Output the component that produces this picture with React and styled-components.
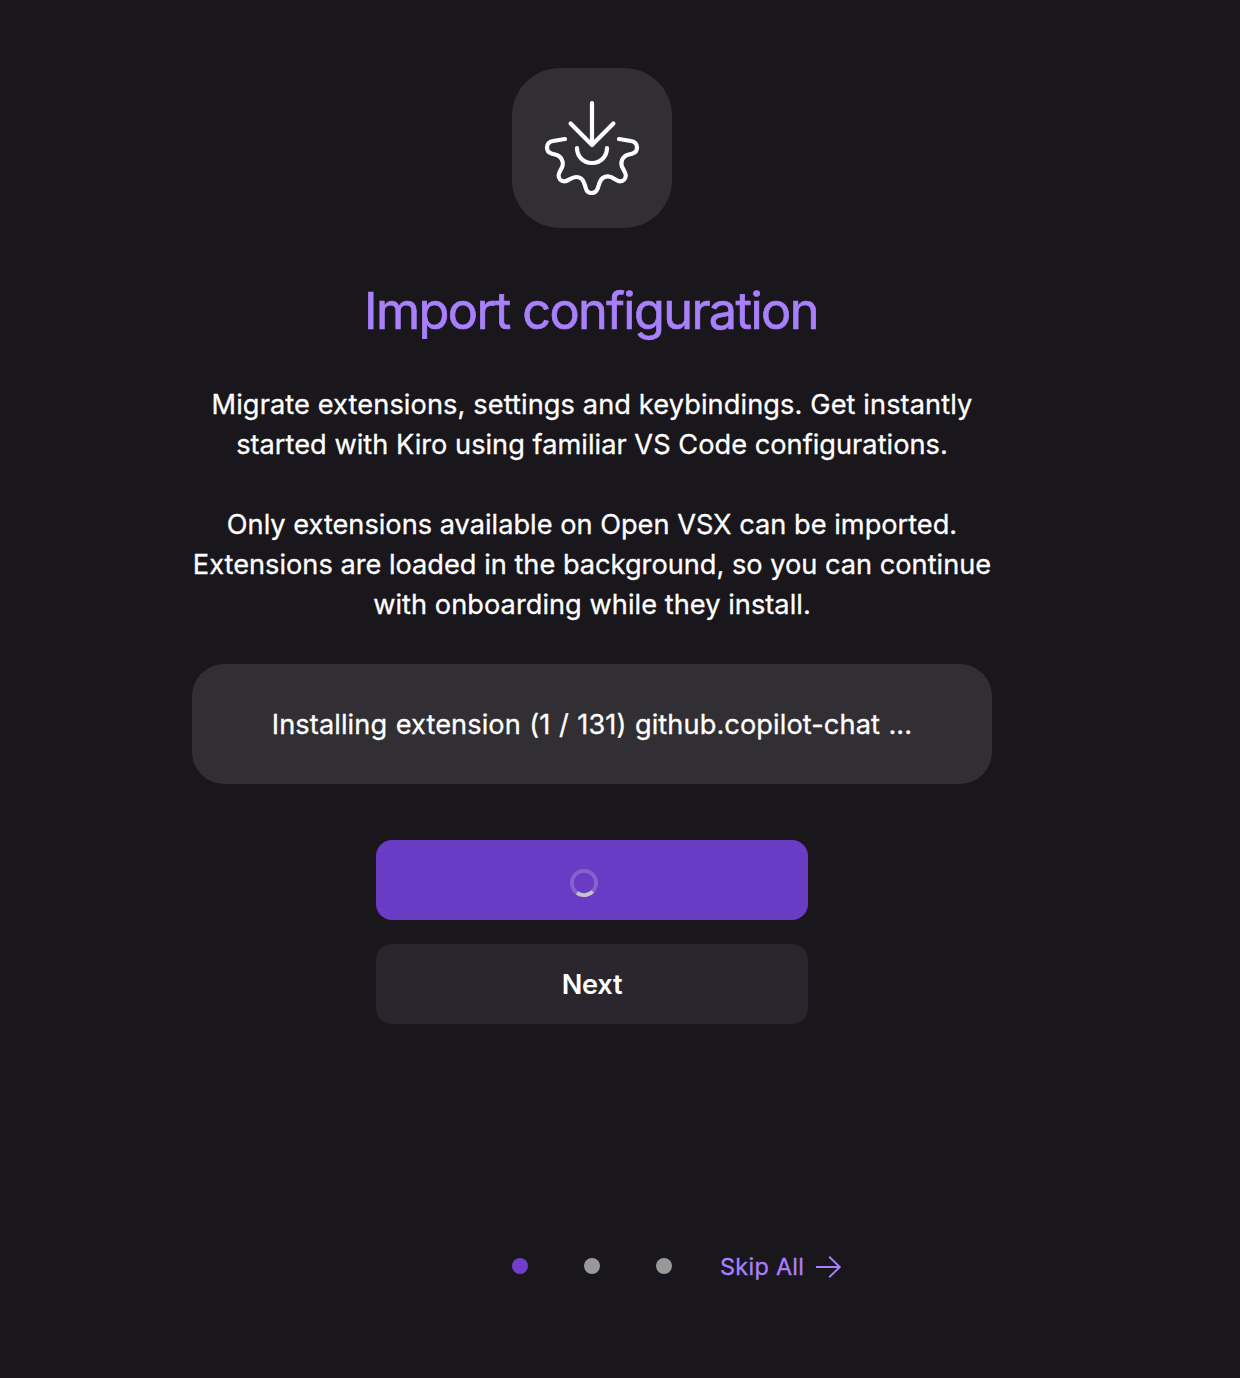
import React from "react";
import styled, { createGlobalStyle } from "styled-components";

const GlobalStyle = createGlobalStyle`
  body {
    margin: 0;
    background: #19161c;
    font-family: Inter, "Liberation Sans", sans-serif;
    color: #fff;
  }
`;

const Page = styled.main`
  box-sizing: border-box;
  width: 1184px;
  height: 1378px;
  padding-top: 68px;
  display: flex;
  flex-direction: column;
  align-items: center;
`;

const IconTile = styled.div`
  width: 160px;
  height: 160px;
  border-radius: 48px;
  background: #312f33;
  display: flex;
  align-items: center;
  justify-content: center;
`;

const Title = styled.h1`
  margin: 51px 2px 0 0;
  height: 65px;
  line-height: 64px;
  font-size: 50.4px;
  font-weight: 400;
  letter-spacing: ${(p) => p.$track}px;
  white-space: nowrap;
  color: #a980fb;
  -webkit-text-stroke: 0.7px #a980fb;
`;

const Copy = styled.p`
  margin: ${(p) => p.$top}px 0 0;
  font-size: 27.2px;
  line-height: 40px;
  text-align: center;
  display: flex;
  flex-direction: column;
  align-items: center;
`;

const Line = styled.span`
  letter-spacing: ${(p) => p.$track}px;
  word-spacing: ${(p) => p.$gap || 0}px;
  white-space: nowrap;
  -webkit-text-stroke: 0.3px #fff;
`;

const Status = styled.div`
  box-sizing: border-box;
  width: 800px;
  height: 120px;
  padding-top: 2px;
  margin-top: 39px;
  border-radius: 32px;
  background: #312f33;
  display: flex;
  align-items: center;
  justify-content: center;
  font-size: 27.2px;
  line-height: 40px;
`;

const Actions = styled.div`
  margin-top: 56px;
  display: flex;
  flex-direction: column;
  gap: 24px;
`;

const Button = styled.button`
  box-sizing: border-box;
  width: 432px;
  height: 80px;
  border: 0;
  border-radius: 16px;
  padding: ${(p) => (p.$primary ? "6px 16px 0 0" : "2px 0 0")};
  background: ${(p) => (p.$primary ? "#6a3bc4" : "#29262d")};
  color: #fff;
  font: 600 27.2px/40px Inter, "Liberation Sans", sans-serif;
  letter-spacing: -0.3px;
  display: flex;
  align-items: center;
  justify-content: center;
`;

const Footer = styled.footer`
  align-self: flex-start;
  margin: 222px 0 0 512px;
  height: 40px;
  display: flex;
  align-items: center;
`;

const Dots = styled.div`
  display: flex;
  gap: 56px;
`;

const Dot = styled.span`
  width: 16px;
  height: 16px;
  border-radius: 50%;
  background: ${(p) => (p.$active ? "#6f3ecb" : "#999")};
`;

const Skip = styled.a`
  margin-left: 48px;
  padding-top: 2px;
  display: flex;
  align-items: center;
  gap: 12px;
  color: #a980fb;
  font-size: 23.4px;
  line-height: 32px;
`;

const SkipLabel = styled.span`
  width: 84px;
  white-space: nowrap;
  letter-spacing: 0.3px;
  -webkit-text-stroke: 0.3px #a980fb;
`;

const ImportIcon = () => (
  <svg width="100" height="100" viewBox="0 0 100 100" fill="none" stroke="#fff" strokeWidth="4.2" strokeLinecap="round" strokeLinejoin="round">
    <path d="M50 5V47M28.6 25.6L50 47L71.4 25.6" />
    <path d="M35 50C35 58.5 41.6 65 50 65S65 58.5 65 50" />
    <path d="M23 41L11 43C7 43.8 5 46.2 5 49.5C5 52.8 6.8 54.9 10 55.7L14 56.8C19.2 58.3 21.8 63.3 20.6 67.8C19.7 71.3 16.6 74 16.6 77.2C16.6 80.8 19 83.4 22.2 83.4C26.3 83.4 29 79 34.2 79C38.5 79 41 81.3 42.2 85.2L43.8 90.2C44.7 93.4 46.7 95 49.7 95C52.7 95 54.8 93.4 55.8 90.2L57.4 85.2C58.8 80.9 61.4 78.7 65.4 78.4C71 78 73.6 83.4 78.2 83.4C81.4 83.4 83.8 80.8 83.8 77.2C83.8 73.8 80.5 71.3 79.6 67.6C78.4 63 81 58.2 86 56.8L90 55.7C93.2 54.9 95 52.8 95 49.5C95 46.2 93 43.8 89 43L77 41" />
  </svg>
);

const Spinner = () => (
  <svg width="28" height="28" viewBox="0 0 28 28" fill="none" strokeWidth="3.8">
    <circle cx="14" cy="14" r="12.1" stroke="#8861cf" />
    <path d="M7 23.9A12.1 12.1 0 0 0 22.6 22.5" stroke="#c7c3c5" />
  </svg>
);

const ArrowIcon = () => (
  <svg width="26" height="24" viewBox="0 0 26 24" fill="none" stroke="#a980fb" strokeWidth="1.9">
    <path d="M0 12H24M13.2 1.7L23.8 12L13.2 22.3" />
  </svg>
);

export default function App() {
  return (
    <>
      <GlobalStyle />
      <Page>
        <IconTile><ImportIcon /></IconTile>
        <Title $track={-1.58}>Import configuration</Title>
        <Copy $top={41}>
          <Line $track={0.1}>Migrate extensions, settings and keybindings. Get instantly</Line>
          <Line $track={0.02}>started with Kiro using familiar VS Code configurations.</Line>
        </Copy>
        <Copy $top={40}>
          <Line $track={0}>Only extensions available on Open VSX can be imported.</Line>
          <Line $track={0}>Extensions are loaded in the background, so you can continue</Line>
          <Line $track={0.04}>with onboarding while they install.</Line>
        </Copy>
        <Status><Line $track={0.09} $gap={0.7}>Installing extension (1 / 131) github.copilot-chat ...</Line></Status>
        <Actions>
          <Button $primary aria-label="Importing"><Spinner /></Button>
          <Button>Next</Button>
        </Actions>
        <Footer>
          <Dots><Dot $active /><Dot /><Dot /></Dots>
          <Skip><SkipLabel>Skip All</SkipLabel><ArrowIcon /></Skip>
        </Footer>
      </Page>
    </>
  );
}
